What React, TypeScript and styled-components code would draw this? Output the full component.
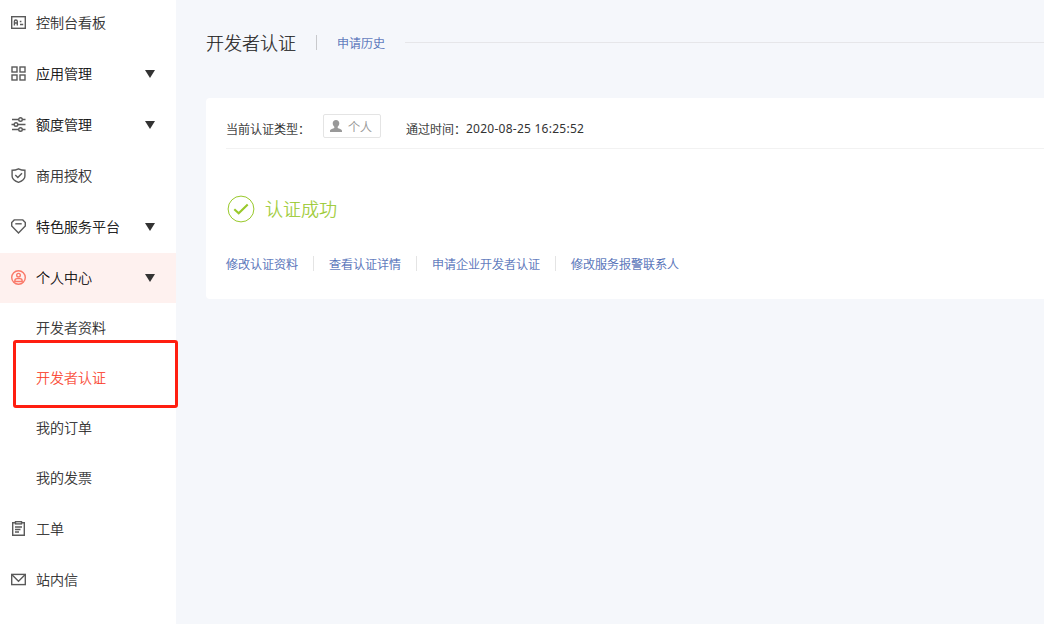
import React from "react";
import styled, { createGlobalStyle } from "styled-components";

const GlobalStyle = createGlobalStyle`
  * { box-sizing: border-box; }
  body {
    margin: 0;
    overflow: hidden;
    background: #f5f7fb;
    color: #333;
    font-family: "Noto Sans CJK SC", sans-serif;
    font-size: 14px;
    font-weight: 300;
    -webkit-text-stroke: 0.2px currentColor;
  }
`;

const Page = styled.div`
  display: flex;
  height: 624px;
  overflow: hidden;
`;

const Sidebar = styled.nav`
  flex: 0 0 176px;
  background: #fff;
`;

const Menu = styled.ul`
  display: flex;
  flex-direction: column;
  gap: 1px;
  margin: -2px 0 0;
  padding: 0;
  list-style: none;
`;

const MenuRow = styled.div<{ $active?: boolean }>`
  display: flex;
  align-items: center;
  height: 50px;
  padding: 0 20px 2px 11px;
  background: ${(p) => (p.$active ? "#fef1ef" : "transparent")};
  color: ${(p) => (p.$active ? "#fa7868" : "#5a5a5a")};
`;

const MenuIcon = styled.svg`
  flex: none;
  width: 15px;
  height: 15px;
  margin-right: 10px;
  fill: none;
  stroke: currentColor;
  stroke-width: 1.4;
`;

const MenuLabel = styled.span<{ $strong?: boolean }>`
  flex: 1;
  color: ${(p) => (p.$strong ? "#000" : "#222")};
  line-height: 20px;
  white-space: nowrap;
`;

const Caret = styled.i`
  border: 5px solid transparent;
  border-top: 8px solid #333;
  border-bottom: 0;
  margin: 2px 1px 0 0;
`;

const SubMenu = styled.ul`
  margin: 0;
  padding: 0;
  list-style: none;
`;

const SubItem = styled.li<{ $current?: boolean }>`
  position: relative;
  height: 50px;
  padding-left: 36px;
  line-height: 49px;
  color: ${(p) => (p.$current ? "#fa3c28" : "#222")};
`;

const Highlight = styled.span`
  position: absolute;
  z-index: 1;
  left: 13px;
  top: -13px;
  width: 165px;
  height: 68px;
  border: 3px solid #ff1e10;
  border-radius: 3px;
`;

const Main = styled.main`
  flex: 1;
  min-width: 0;
  padding: 28px 0 0 30px;
`;

const Header = styled.header`
  display: flex;
  align-items: center;
  height: 30px;
`;

const Title = styled.h1`
  margin: -2px 20px 0 0;
  font-size: 18px;
  font-weight: 300;
  line-height: 30px;
  color: #222;
`;

const Divider = styled.span<{ $gap: number; $tone?: string }>`
  width: 1px;
  height: 15px;
  margin: -1px ${(p) => p.$gap}px 0 0;
  background: ${(p) => p.$tone ?? "#e4e4e4"};
`;

const Link = styled.a`
  margin: -1px 15px 0 0;
  color: #4767b4;
  font-size: 12px;
  line-height: 18px;
  white-space: nowrap;
`;

const Rule = styled.span`
  flex: 1;
  height: 1px;
  margin: 0 0 1px 5px;
  background: #e6e6e9;
`;

const Card = styled.section`
  height: 201px;
  margin-top: 40px;
  padding: 10px 0 0 20px;
  border-radius: 4px 0 0 4px;
  background: #fff;
`;

const InfoRow = styled.div`
  display: flex;
  align-items: center;
  height: 41px;
  border-bottom: 1px solid #f2f2f2;
  color: #222;
  font-size: 12px;
`;

const InfoLabel = styled.span`
  width: 97px;
`;

const Tag = styled.span`
  display: flex;
  align-items: center;
  width: 58px;
  height: 24px;
  margin: -4px 25px 0 0;
  padding-left: 6px;
  border: 1px solid #e4e4e4;
  border-radius: 2px;
  color: #909090;
  white-space: nowrap;

  svg { margin-right: 6px; }
`;

const TimeLabel = styled.span`
  width: 60px;
  white-space: nowrap;
`;

const Time = styled.span`
  padding-top: 1px;
  color: #333;
  font-family: "Noto Sans", sans-serif;
  font-weight: 400;
  letter-spacing: 0.25px;
  white-space: nowrap;
  -webkit-text-stroke: 0;
`;

const Status = styled.div`
  display: flex;
  align-items: center;
  height: 30px;
  margin-top: 45px;
  padding-left: 1px;
  color: #99c92b;
  font-size: 18px;

  svg { margin-right: 11px; }
`;

const StatusText = styled.span`
  margin: -2px 0 0 -1px;
`;

const Actions = styled.div`
  display: flex;
  align-items: center;
  height: 20px;
  margin-top: 30px;
`;

const icons = {
  board: (
    <>
      <rect x="0.7" y="1.7" width="13.6" height="11.6" />
      <path d="M3.4 10.4V6.2Q3.4 5 4.8 5T6.3 6.2V10.4M3.4 8H6.3M8.8 6.5H10.4M9 9.5H12.2" strokeWidth="1.4" />
    </>
  ),
  apps: (
    <>
      <rect x="1" y="1" width="5" height="5" />
      <rect x="9" y="1" width="5" height="5" />
      <rect x="1" y="9" width="5" height="5" />
      <rect x="9" y="9" width="5" height="5" />
    </>
  ),
  sliders: (
    <>
      <path d="M1 2.5H7.5M11.5 2.5H14.5M0.5 7.5H3M7 7.5H14.5M1 12.5H7.5M11.5 12.5H14.5" />
      <circle cx="9.5" cy="2.5" r="1.8" />
      <circle cx="5" cy="7.5" r="1.8" />
      <circle cx="9.5" cy="12.5" r="1.8" />
    </>
  ),
  shield: (
    <>
      <path d="M7.5 0.8Q10.5 2.3 13.9 2.3V8.2Q13.9 12 7.5 14.3Q1.1 12 1.1 8.2V2.3Q4.5 2.3 7.5 0.8Z" />
      <path d="M4.3 7.1L6.8 9.5L11 5.2" />
    </>
  ),
  gem: (
    <>
      <path d="M3.2 0.9H11.8L14.3 3.6V7L7.5 14L0.7 7V3.6Z" />
      <path d="M4.3 4.8H10.7" />
    </>
  ),
  person: (
    <>
      <circle cx="7.5" cy="7.5" r="6.8" />
      <circle cx="7.5" cy="5.2" r="1.8" />
      <path d="M3.8 12V11Q3.8 8.6 6 8.6H9Q11.2 8.6 11.2 11V12M3.8 11.5H11.2" />
    </>
  ),
  ticket: (
    <>
      <path d="M4.5 1.8H1.7V14.2H13.3V1.8H10.5" />
      <rect x="4.5" y="0.7" width="6" height="2.2" />
      <path d="M4 6H11M4 8.5H9.5M4 11H8" />
    </>
  ),
  mail: (
    <>
      <rect x="0.7" y="2.4" width="13.6" height="10.2" />
      <path d="M1 2.8L7.5 9.2L14 2.8" />
    </>
  ),
};

type Entry = {
  icon: keyof typeof icons;
  label: string;
  expandable?: boolean;
  children?: string[];
};

const entries: Entry[] = [
  { icon: "board", label: "控制台看板" },
  { icon: "apps", label: "应用管理", expandable: true },
  { icon: "sliders", label: "额度管理", expandable: true },
  { icon: "shield", label: "商用授权" },
  { icon: "gem", label: "特色服务平台", expandable: true },
  {
    icon: "person",
    label: "个人中心",
    expandable: true,
    children: ["开发者资料", "开发者认证", "我的订单", "我的发票"],
  },
  { icon: "ticket", label: "工单" },
  { icon: "mail", label: "站内信" },
];

const actions = ["修改认证资料", "查看认证详情", "申请企业开发者认证", "修改服务报警联系人"];
const currentPage = "开发者认证";

export default function App() {
  return (
    <Page>
      <GlobalStyle />
      <Sidebar>
        <Menu>
          {entries.map((e) => (
            <li key={e.label}>
              <MenuRow $active={!!e.children}>
                <MenuIcon viewBox="0 0 15 15">{icons[e.icon]}</MenuIcon>
                <MenuLabel $strong={e.expandable}>{e.label}</MenuLabel>
                {e.expandable && <Caret />}
              </MenuRow>
              {e.children && (
                <SubMenu>
                  {e.children.map((name) => (
                    <SubItem key={name} $current={name === currentPage}>
                      {name}
                      {name === currentPage && <Highlight />}
                    </SubItem>
                  ))}
                </SubMenu>
              )}
            </li>
          ))}
        </Menu>
      </Sidebar>
      <Main>
        <Header>
          <Title>{currentPage}</Title>
          <Divider $gap={20} $tone="#c8c9cc" />
          <Link>申请历史</Link>
          <Rule />
        </Header>
        <Card>
          <InfoRow>
            <InfoLabel>当前认证类型：</InfoLabel>
            <Tag>
              <svg width="12" height="12" viewBox="0 0 12 12" fill="#999">
                <path d="M6 0C8 0 9.3 1.3 9.3 3.3C9.3 4.8 8.6 6 7.7 6.8V8C9 8.8 12 9 12 11V12H0V11C0 9 3 8.8 4.3 8V6.8C3.4 6 2.7 4.8 2.7 3.3C2.7 1.3 4 0 6 0Z" />
              </svg>
              个人
            </Tag>
            <TimeLabel>通过时间：</TimeLabel>
            <Time>2020-08-25 16:25:52</Time>
          </InfoRow>
          <Status>
            <svg width="28" height="28" viewBox="0 0 28 28" fill="none" stroke="#99c92b">
              <circle cx="14" cy="14" r="12.9" strokeWidth="1" />
              <path d="M7.3 14.3L11.7 18.3L20.7 9.4" strokeWidth="2.1" />
            </svg>
            <StatusText>认证成功</StatusText>
          </Status>
          <Actions>
            {actions.map((name, i) => (
              <React.Fragment key={name}>
                {i > 0 && <Divider $gap={15} />}
                <Link>{name}</Link>
              </React.Fragment>
            ))}
          </Actions>
        </Card>
      </Main>
    </Page>
  );
}
